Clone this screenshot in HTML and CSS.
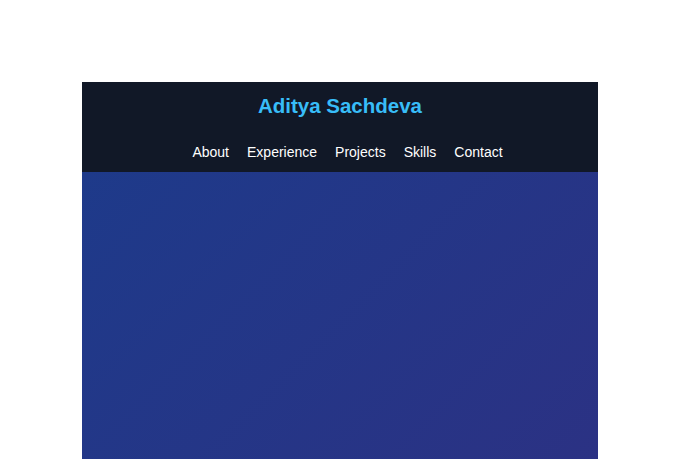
FILE: index.html
```html
<!DOCTYPE html>
<html lang="en">
<head>
    <meta charset="UTF-8">
    <meta name="viewport" content="width=device-width, initial-scale=1.0">
    <title>Aditya Sachdeva</title>
    <link rel="stylesheet" href="styles.css">
</head>
<body>
    <div class="site">
        <header class="header">
            <h1 class="name">Aditya Sachdeva</h1>
            <nav class="nav">
                <a href="#about">About</a>
                <a href="#experience">Experience</a>
                <a href="#projects">Projects</a>
                <a href="#skills">Skills</a>
                <a href="#contact">Contact</a>
            </nav>
        </header>
        <section class="hero">
            <!-- hero content -->
        </section>
    </div>
</body>
</html>
```

FILE: styles.css
```css
body {
    font-family: 'Liberation Sans', Arial, sans-serif;
    margin: 0;
    padding: 0;
    background-color: #fff;
}
.site {
    width: 516px;
    margin: 82px 0 0 82px;
}
.header {
    background-color: #111827;
    padding: 10px 0 10px;
    text-align: center;
}
.name {
    margin: 0;
    font-size: 20.5px;
    line-height: 28px;
    font-weight: bold;
    color: #38bdf8;
}
.nav {
    display: flex;
    justify-content: center;
    gap: 18px;
    margin-top: 22px;
    padding-left: 15px;
}
.nav a {
    color: #fff;
    text-decoration: none;
    font-size: 14px;
    line-height: 20px;
}
.hero {
    height: 640px;
    background: linear-gradient(135deg, #1e3a8a, #312e81);
}
```
